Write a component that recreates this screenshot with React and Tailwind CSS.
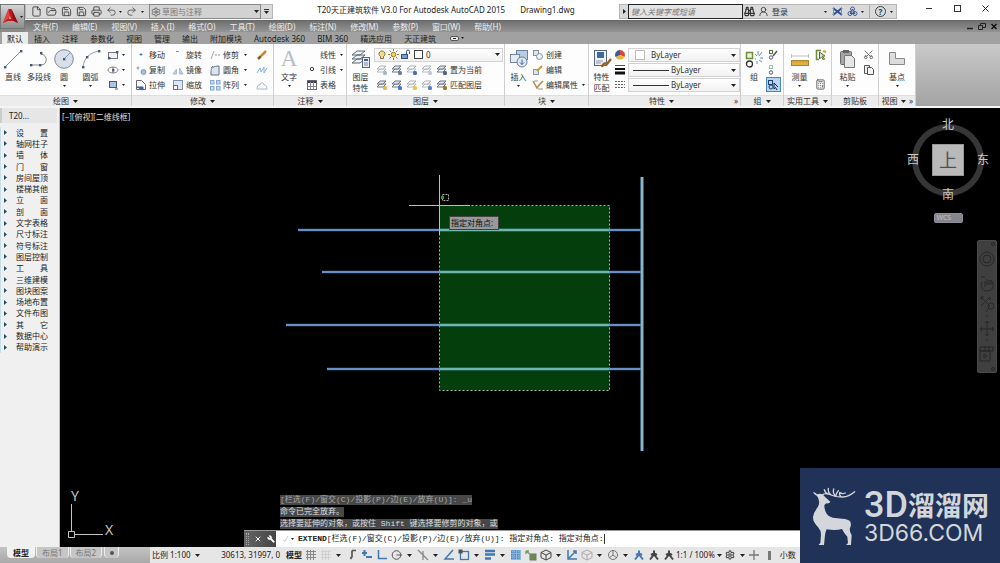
import React from "react";
import {
  Binoculars, File, FolderOpen, Save, Printer, Undo2, Redo2, Settings, UserRound, Wrench, X, Scissors, Calculator,
} from "lucide-react";

const G = ({ w = 14, h = 14, box, children, className = "" }) => (
  <svg
    aria-hidden="true"
    width={w}
    height={h}
    viewBox={box || `0 0 ${w} ${h}`}
    fill="none"
    stroke="#555"
    strokeWidth="1"
    className={`shrink-0 ${className}`}
  >
    {children}
  </svg>
);

const Caret = ({ className = "" }) => (
  <svg aria-hidden="true" width="5" height="3" viewBox="0 0 5 3" className={`shrink-0 ${className}`}>
    <path d="M0 0h5L2.5 3z" fill="#222" />
  </svg>
);

const Dot = () => (
  <svg aria-hidden="true" width="3" height="2" viewBox="0 0 3 2" className="shrink-0">
    <path d="M0 0h3L1.5 2z" fill="#222" />
  </svg>
);

/* ---------- ribbon drawings ---------- */

const node = (x, y) => <rect x={x - 1} y={y - 1} width="2.4" height="2.4" fill="#46597a" stroke="none" />;

const LineIcon = () => (
  <G w={20} h={20}><path d="M2 18L18 2" stroke="#888" />{node(2, 18)}{node(18, 2)}</G>
);
const PolyIcon = () => (
  <G w={20} h={20}>
    <path d="M2 16h10c7 0 7-10 0-11" stroke="#888" />
    {node(2, 16)}{node(11, 16)}{node(12, 4)}
  </G>
);
const CircleIcon = () => (
  <G w={20} h={20}>
    <circle cx="10" cy="10" r="9.3" fill="#d8dfe9" stroke="#7b8797" />
    <path d="M10 10l6-6" stroke="#8294b5" />{node(10, 10)}
  </G>
);
const ArcIcon = () => (
  <G w={20} h={20}>
    <path d="M2 18C3 9 8 4 18 2" stroke="#999" />
    {node(2, 18)}{node(6, 8)}{node(18, 2)}
  </G>
);
const RectIcon = () => (
  <G w={12} h={10}><rect x="1.5" y="2.5" width="9" height="6" fill="#eef1f5" stroke="#777" />{node(2, 8)}{node(10, 2)}</G>
);
const EllipseIcon = () => (
  <G w={12} h={10}><ellipse cx="6" cy="5" rx="5" ry="3" stroke="#888" />{node(6, 5)}<path d="M6 2v6" stroke="#667" /></G>
);
const HatchIcon = () => (
  <G w={12} h={10}><rect x="2.5" y="1.5" width="7" height="6" fill="#a9c4e6" stroke="#557" /><path d="M8 9h3" stroke="#557" /></G>
);
const MoveIcon = () => <G w={12} h={12}><path d="M6 4v3M4.500 5.500h3" stroke="#5d7fb0" /></G>;
const CopyDots = () => (
  <G w={12} h={12}><circle cx="3" cy="4" r="1.4" fill="#9cb0cc" stroke="none" /><circle cx="8.500" cy="8" r="2.4" fill="#a9c0e2" stroke="#7b93b8" /></G>
);
const StretchIcon = () => (
  <G w={12} h={12}><path d="M1.500 1.500h5l4 4v5h-9z" stroke="#667" fill="#fff" /><path d="M2 8h6v3z" fill="#3c6297" stroke="#3c6297" /></G>
);
const RotateIcon = () => <G w={12} h={12}><path d="M4 2.500h3" stroke="#6a94c6" /></G>;
const MirrorIcon = () => <G w={12} h={12}><path d="M1 10l3.500-5v5zM11 10L7.500 4v6z" fill="#c2d3ea" stroke="#a6b9d5" /></G>;
const ScaleIcon = () => (
  <G w={12} h={12}><rect x="1.500" y="1.500" width="9" height="9" fill="#dce8f6" stroke="#7d90ab" /><rect x="1.500" y="6.500" width="4" height="4" fill="#fff" stroke="#4c74ad" /></G>
);
const TrimIcon = () => <G w={12} h={12}><path d="M2 10L5 2" stroke="#aaa" /><path d="M6 6h2M9 6h2" stroke="#999" /></G>;
const FilletIcon = () => <G w={12} h={12}><path d="M2 11V8c0-4 2-6 8-6v9z" fill="#dbe4ef" stroke="#66758a" /><path d="M2 4l2-2" stroke="#66758a" /></G>;
const ArrayIcon = () => (
  <G w={12} h={12}>
    {[[1, 1], [7, 1], [1, 7], [7, 7]].map(([x, y]) => (
      <rect key={`${x}${y}`} x={x + 0.5} y={y + 0.5} width="3.500" height="3.500" fill="#c6daf1" stroke="#86a6cf" />
    ))}
  </G>
);
const EraseIcon = () => <G w={12} h={12}><path d="M2 10l3-3" stroke="#8a5a22" strokeWidth="2.500" /><path d="M5 7l5-5" stroke="#c88a35" strokeWidth="2.500" /></G>;
const ExplodeIcon = () => <G w={12} h={12}><path d="M1 9l3-5 1 4 3-5v6l3-5" stroke="#8fb0dc" /></G>;
const OffsetIcon = () => <G w={12} h={12}><path d="M1 10h10c0-3-1-4-3-4 0-3-4-3-4 0-2 0-3 1-3 4z" stroke="#a8b8cc" /></G>;
const LeaderIcon = () => <G w={12} h={12}><circle cx="6" cy="5" r="1.700" stroke="#444" /></G>;
const TableIcon = () => (
  <G w={12} h={12}><rect x="1.500" y="1.500" width="9" height="9" stroke="#667" /><path d="M1.500 3h9" stroke="#445" strokeWidth="2" /><path d="M1.500 7.500h9M4.500 3v8M7.500 3v8" stroke="#889" /></G>
);
const sheet = (x, y, fill = "#e8edf3", stroke = "#6b7684") => (
  <path d={`M${x} ${y + 3}l3-3h6l-3 3z`} fill={fill} stroke={stroke} />
);
const LayersIcon = () => (
  <G w={20} h={20}>
    <path d="M1 14l5-4h8l-5 4zM1 10l5-4h8l-5 4zM1 6l5-4h8l-5 4z" fill="#edf0f4" stroke="#5f6873" />
    <rect x="11.500" y="8.500" width="7" height="10" fill="#e8eef6" stroke="#56657a" />
    <path d="M13 11h4" stroke="#3b6298" strokeWidth="2" /><path d="M13 14h4M13 16h4" stroke="#889" />
  </G>
);
const LayerSmall = ({ badge = "#e3b43f", dim }) => (
  <G w={12} h={12}>
    {sheet(1, 5, "#fff", dim ? "#b4bac2" : "#6b7684")}
    {sheet(1, 2, dim ? "#fff" : "#dfe6ee", dim ? "#a9b0b8" : "#6b7684")}
    <rect x="7" y="7" width="4" height="4" rx="1.500" fill={badge} stroke="none" />
  </G>
);
const InsertIcon = () => (
  <G w={20} h={20}>
    <rect x="7.500" y="1.500" width="11" height="9" fill="#b8cbe4" stroke="#6d83a3" />
    <rect x="1.500" y="5.500" width="9" height="8" fill="#e4ebf4" stroke="#77869c" />
    <circle cx="13" cy="13" r="5" fill="#dfe7f0" stroke="#6e7f96" /><path d="M13 10.500v5m-2-2l2 2 2-2" stroke="#3a6ab2" />
  </G>
);
const CreateIcon = () => <G w={12} h={12}><rect x="1.500" y="1.500" width="5" height="5" fill="#dfe6ee" stroke="#8290a3" /><circle cx="7.500" cy="7.500" r="3" fill="#eef1f5" stroke="#8290a3" /></G>;
const EditIcon = () => <G w={12} h={12}><rect x="1.500" y="5.500" width="5" height="5" fill="#dfe6ee" stroke="#8c97a6" /><path d="M5 7l5-5" stroke="#cc9b3c" strokeWidth="2" /></G>;
const AttrIcon = () => <G w={12} h={12}><path d="M1 2l4 7 2-3 4-4" stroke="#b98b45" strokeWidth="1.500" /><path d="M6 10h5M2 2h4" stroke="#8c97a6" /></G>;
const PropsIcon = () => (
  <G w={20} h={20}>
    <rect x="2.500" y="1.500" width="12" height="15" fill="#eef3f9" stroke="#55647a" />
    <rect x="5" y="3" width="7" height="6" fill="#3f689f" stroke="none" /><path d="M4 12h7M4 14h5" stroke="#8894a5" />
    <path d="M10 18c1-4 3-4 5-3l4-5" stroke="#9a6128" strokeWidth="2.400" />
  </G>
);
const WheelIcon = () => (
  <G w={12} h={12}>
    <path d="M6 6V1a5 5 0 0 1 4.500 7z" fill="#d9473a" stroke="none" />
    <path d="M6 6l4.500 2a5 5 0 0 1-9 0z" fill="#e6b82f" stroke="none" />
    <path d="M6 6L1.500 8A5 5 0 0 1 6 1z" fill="#345c9e" stroke="none" />
  </G>
);
const WeightsIcon = () => <G w={12} h={12}><path d="M1 1.500h10" /><path d="M1 5h10" stroke="#111" strokeWidth="2" /><path d="M1 9h10" stroke="#111" strokeWidth="3" /></G>;
const TypesIcon = () => <G w={12} h={12}><path d="M1 2.500h10M1 5.500h10M1 8.500h10" stroke="#666" strokeDasharray="2 1" /></G>;
const GroupIcon = () => (
  <G w={20} h={20}>
    <rect x="2.500" y="3.500" width="6" height="6" fill="#edf3dd" stroke="#6d8f3c" strokeWidth="1.500" />
    <circle cx="5.500" cy="15" r="3" stroke="#333" strokeWidth="1.300" />
    <path d="M11 5l2 2M14 2v4M18 3l-3 4M12 10h-1M16 9h3M15 11l3 2M13 12v3" stroke="#5c90c4" />
  </G>
);
const UngroupIcon = ({ pencil }) => (
  <G w={12} h={12}><rect x="2.500" y="1.500" width="3" height="3" stroke={pencil ? "#557a33" : "#8ca"} /><circle cx="4" cy="8.500" r="1.700" stroke="#557" />{pencil && <path d="M6 7l4-5" stroke="#555" strokeWidth="1.500" />}</G>
);
const GroupSelIcon = () => <G w={12} h={12}><rect x="1.500" y="1.500" width="4" height="4" stroke="#246" /><circle cx="4" cy="8" r="2" stroke="#246" /><path d="M7 4v6l1.500-1.500L10 11M7 4l4 4" stroke="#223" /></G>;
const MeasureIcon = () => (
  <G w={20} h={20}><path d="M1.500 5v4M18.500 5v4M1.500 7h17" stroke="#b9c2cc" /><rect x="1.500" y="11.500" width="17" height="5" fill="#e0b148" stroke="#b18325" /><path d="M4 12v2M7 12v2M10 12v2M13 12v2M16 12v2" stroke="#c4962f" /></G>
);
const QuickSelIcon = () => <G w={12} h={12}><path d="M6 1.500H1.500v9H4" stroke="#6c8c3e" strokeWidth="1.500" /><path d="M4.500 3v7l2-2 2 3 1-1-2-3h2.500z" fill="#d5e3bd" stroke="#586b3b" /><path d="M8 2l3 1" stroke="#d79b2c" strokeWidth="2" /></G>;
const PasteIcon = () => (
  <G w={20} h={20}>
    <rect x="2.500" y="2.500" width="11" height="13" rx="1" fill="#a6a6a6" stroke="#6b6b6b" /><rect x="5" y="1" width="6" height="3" fill="#666" stroke="none" />
    <path d="M6.500 6.500h7l3 3v9h-10z" fill="#e6e6e6" stroke="#777" />
  </G>
);
const ClipCopyIcon = () => <G w={12} h={12}><path d="M1.500 1.500h5v8h-5z" fill="#eee" /><path d="M4.500 3.500h4l2 2v5h-6z" fill="#f3f3f3" /></G>;
const BaseIcon = () => <G w={20} h={20}><path d="M2.500 15.500v-12h6v6h9v6z" fill="#dcdcdc" stroke="#888" /></G>;

/* ---------- ribbon building blocks ---------- */

const Big = ({ icon, label, label2, arrow, className = "" }) => (
  <button type="button" className={`flex h-[48px] flex-col items-center text-center leading-[11px] ${className}`}>
    <span className="flex h-[24px] items-center justify-center">{icon}</span>
    <span className="whitespace-nowrap">{label}</span>
    {label2 && <span className="whitespace-nowrap">{label2}</span>}
    {arrow && <span className="flex h-[8px] items-center"><Dot /></span>}
  </button>
);

const Cmd = ({ icon, label, arrow, name }) => (
  <div className="flex h-[15px] items-center">
    <button type="button" aria-label={label ? undefined : name} className="flex items-center gap-[2px] whitespace-nowrap">
      {icon}
      {label}
    </button>
    {arrow && (
      <button type="button" aria-label={`${label || name} 更多`} className="flex h-[15px] flex-1 items-center justify-center"><Dot /></button>
    )}
  </div>
);

const Panel = ({ title, arrow = true, launcher, className, children }) => (
  <section aria-label={title} className={`flex shrink-0 flex-col border-r border-[#cfcfcf] bg-[#fdfdfd] ${className}`}>
    <div className="flex h-[51px] gap-0 pt-[3px]">{children}</div>
    <div className="flex h-[11px] items-center border-t border-[#dedede] bg-[#ececec] leading-[10px]">
      <button type="button" className="flex flex-1 items-center justify-center gap-1 whitespace-nowrap">{title}{arrow && <Caret />}</button>
      {launcher && <button type="button" aria-label={`${title}设置`} className="pr-[2px]">»</button>}
    </div>
  </section>
);

const PropSelect = ({ label, swatch }) => (
  <div className="flex h-[14px] items-center border border-[#d3d3d3] bg-gradient-to-b from-white to-[#f1f1f1]">
    {swatch ? (
      <span className="mx-[6px] h-[10px] w-[10px] border border-[#bbb] bg-white" />
    ) : (
      <span className="ml-1 mr-[2px] h-px w-[36px] bg-[#333]" />
    )}
    <select aria-label={label} className="h-3 min-w-0 flex-1 appearance-none bg-transparent leading-3 outline-none"><option>ByLayer</option></select>
    <Caret className="mr-[3px]" />
  </div>
);

/* ---------- page regions ---------- */

function TitleBar() {
  const quick = [
    ["新建", File], ["打开", FolderOpen], ["保存", Save], ["另存为", Save], ["打印", Printer],
  ];
  return (
    <div className="flex h-5 items-start">
      <div className="mt-1 flex h-[15px] items-center border border-[#b5b5b5] bg-[#dadada] pl-[3px]">
        {quick.map(([name, Icon]) => (
          <button key={name} type="button" aria-label={name} className="flex w-[15px] justify-center">
            <Icon size={11} strokeWidth={2} color="#444" />
          </button>
        ))}
        <button type="button" aria-label="放弃" className="flex w-[15px] justify-center"><Undo2 size={11} color="#555" /></button>
        <Dot />
        <button type="button" aria-label="重做" className="flex w-[19px] justify-center"><Redo2 size={11} color="#555" /></button>
        <Dot />
        <div className="ml-[5px] flex h-[15px] w-[112px] items-center border border-[#888] bg-[#d2d2d2] px-px">
          <Settings size={10} color="#555" />
          <select aria-label="工作空间" className="ml-px h-[13px] min-w-0 flex-1 appearance-none bg-transparent leading-[13px] text-[#777] outline-none"><option>草图与注释</option></select>
          <Caret />
        </div>
        <button type="button" aria-label="自定义" className="flex w-[11px] flex-col items-center gap-px"><span className="h-px w-[5px] bg-[#333]" /><Caret /></button>
      </div>
      <h1 className="flex flex-1 justify-center gap-[15px] whitespace-nowrap pt-[3px] leading-[13px] text-[#222]">
        <span>T20天正建筑软件 V3.0 For Autodesk AutoCAD 2015</span>
        <span>Drawing1.dwg</span>
      </h1>
      <div className="mt-1 flex h-[15px] items-center border border-[#b5b5b5] bg-[#dadada]">
        <button type="button" aria-label="展开" className="flex h-[13px] w-[8px] items-center justify-center">
          <svg aria-hidden="true" width="3" height="5" viewBox="0 0 3 5"><path d="M0 0v5l3-2.500z" fill="#222" /></svg>
        </button>
        <input aria-label="搜索" placeholder="键入关键字或短语" className="h-[15px] w-[115px] border border-[#222] bg-[#e4e4e4] px-[2px] italic outline-none placeholder:text-[#777]" />
        <button type="button" aria-label="查找" className="flex w-[13px] justify-center"><Binoculars size={11} color="#333" strokeWidth={2.5} /></button>
        <button type="button" className="ml-[2px] flex items-center gap-[3px]"><UserRound size={11} color="#444" />登录</button>
        <span className="ml-[36px]"><Dot /></span>
        <button type="button" aria-label="Exchange" className="ml-[5px]">
          <G w={11} h={11}><path d="M1 2l9 7M1 9l9-7" stroke="#2f4f96" strokeWidth="2" /><path d="M1.500 2v7M9.500 2v7" stroke="#7b8fb8" /></G>
        </button>
        <button type="button" aria-label="A360" className="ml-[4px] flex items-center gap-[3px]">
          <G w={11} h={11}><circle cx="5.500" cy="3" r="2" stroke="#3c5c9c" /><circle cx="3" cy="7.500" r="2" stroke="#3c5c9c" /><circle cx="8" cy="7.500" r="2" stroke="#3c5c9c" /><path d="M5.500 3L3 7.500h5z" stroke="#3c5c9c" /></G>
          <Dot />
        </button>
        <span className="ml-[5px] h-[13px] w-px bg-[#aaa]" />
        <button type="button" aria-label="帮助" className="ml-[5px] flex items-center gap-[4px] pr-[3px]">
          <span className="flex h-[11px] w-[11px] items-center justify-center rounded-full border border-[#345] text-[8px] font-bold leading-none text-[#245]">?</span>
          <Dot />
        </button>
      </div>
      <div className="ml-[18px] flex h-[17px] items-center">
        <button type="button" aria-label="最小化" className="flex w-[28px] justify-center"><span className="h-px w-[6px] bg-[#333]" /></button>
        <button type="button" aria-label="最大化" className="flex w-[28px] justify-center"><span className="h-[7px] w-[7px] border border-[#333]" /></button>
        <button type="button" aria-label="关闭" className="flex w-[29px] justify-center">
          <G w={7} h={7}><path d="M.5 .5l6 6M6.500 .5l-6 6" stroke="#222" /></G>
        </button>
      </div>
    </div>
  );
}

const MENUS = ["文件(F)", "编辑(E)", "视图(V)", "插入(I)", "格式(O)", "工具(T)", "绘图(D)", "标注(N)", "修改(M)", "参数(P)", "窗口(W)", "帮助(H)"];
const TABS = ["插入", "注释", "参数化", "视图", "管理", "输出", "附加模块", "Autodesk 360", "BIM 360", "精选应用", "天正建筑"];

function Header() {
  return (
    <header className="shrink-0">
      <div className="flex bg-white">
        <div className="flex w-[25px] shrink-0 flex-col bg-gradient-to-b from-white from-50% to-[#8a8a8a] to-50% pt-1">
          <button type="button" aria-label="应用程序菜单" className="flex h-[25px] items-center gap-px border border-[#777] bg-gradient-to-b from-[#d5d5d5] to-[#8d8d8d] pl-px">
            <G w={17} h={17}>
              <path d="M6.500 1h3L16 15l-5-2H6L1 15z" fill="#c2191c" stroke="none" />
              <path d="M6.500 1L8 9l-7 6z" fill="#e2443f" stroke="none" />
              <path d="M9.500 1L16 15l-5-3z" fill="#8c1012" stroke="none" />
              <path d="M8 8l1.200 3h-2.400z" fill="#c9a0a0" stroke="none" />
            </G>
            <Dot />
          </button>
        </div>
        <div className="min-w-0 flex-1">
          <TitleBar />
          <nav className="flex h-3 items-center border-t border-[#666] bg-gradient-to-b from-[#707070] to-[#949494] pl-2 text-[#eee]">
            <div className="flex flex-1 gap-[14px]">
              {MENUS.map((m) => <button key={m} type="button" className="whitespace-nowrap leading-[11px]">{m}</button>)}
            </div>
            <div className="flex items-center gap-[5px] pr-[3px]">
              <button type="button" aria-label="最小化图形"><G w={6} h={7}><path d="M0 5.500h6" stroke="#222" strokeWidth="1.500" /></G></button>
              <button type="button" aria-label="还原图形"><G w={8} h={7}><path d="M2.500 3V.5h5v4H5M.5 2.500h4v4h-4z" stroke="#222" /></G></button>
              <button type="button" aria-label="关闭图形"><G w={6} h={7}><path d="M.5 1l5 5M5.500 1l-5 5" stroke="#111" strokeWidth="1.500" /></G></button>
            </div>
          </nav>
        </div>
      </div>
      <div className="flex h-3 bg-[#a1a1a1] pl-[2px] leading-[13px] text-[#222]">
        <button type="button" className="bg-[#ececec] px-[5px]">默认</button>
        <div className="flex items-center">
          {TABS.map((t) => <button key={t} type="button" className="whitespace-nowrap px-[6px]">{t}</button>)}
          <button type="button" aria-label="最小化功能区" className="ml-[8px] flex items-center gap-[2px]">
            <span className="flex h-[5px] w-[9px] items-center justify-center rounded-xs border border-[#555] bg-[#eee]"><span className="h-px w-[3px] bg-[#222]" /></span>
            <Dot />
          </button>
        </div>
      </div>
    </header>
  );
}

function Ribbon() {
  return (
    <div className="flex shrink-0 border-b-2 border-[#f4f4f4] bg-[#f4f4f4]">
      <Panel title="绘图" className="w-[132px]">
        <Big icon={<LineIcon />} label="直线" className="w-[26px]" />
        <Big icon={<PolyIcon />} label="多段线" className="w-[26px]" />
        <Big icon={<CircleIcon />} label="圆" arrow className="w-[24px]" />
        <Big icon={<ArcIcon />} label="圆弧" arrow className="w-[29px]" />
        <div className="flex-1 pr-[3px] pl-[2px]">
          <Cmd name="矩形" icon={<RectIcon />} arrow />
          <Cmd name="椭圆" icon={<EllipseIcon />} arrow />
          <Cmd name="图案填充" icon={<HatchIcon />} arrow />
        </div>
      </Panel>
      <Panel title="修改" className="w-[142px]">
        <div className="w-[37px] pl-[3px]">
          <Cmd icon={<MoveIcon />} label="移动" /><Cmd icon={<CopyDots />} label="复制" /><Cmd icon={<StretchIcon />} label="拉伸" />
        </div>
        <div className="w-[37px] pl-[3px]">
          <Cmd icon={<RotateIcon />} label="旋转" /><Cmd icon={<MirrorIcon />} label="镜像" /><Cmd icon={<ScaleIcon />} label="缩放" />
        </div>
        <div className="w-[46px] pl-[3px]">
          <Cmd icon={<TrimIcon />} label="修剪" arrow /><Cmd icon={<FilletIcon />} label="圆角" arrow /><Cmd icon={<ArrayIcon />} label="阵列" arrow />
        </div>
        <div className="pl-1">
          <Cmd name="删除" icon={<EraseIcon />} /><Cmd name="分解" icon={<ExplodeIcon />} /><Cmd name="偏移" icon={<OffsetIcon />} />
        </div>
      </Panel>
      <Panel title="注释" className="w-[73px]">
        <Big icon={<span className="font-['Liberation_Serif',serif] text-[23px] leading-[24px] text-[#b9bdc4]">A</span>} label="文字" arrow className="w-[30px]" />
        <div className="flex-1 pl-[2px]">
          <Cmd icon={<G w={12} h={12} />} label="线性" arrow /><Cmd icon={<LeaderIcon />} label="引线" arrow /><Cmd icon={<TableIcon />} label="表格" />
        </div>
      </Panel>
      <Panel title="图层" className="w-[158px]">
        <Big icon={<LayersIcon />} label="图层" label2="特性" className="w-[27px]" />
        <div className="flex-1 pr-px">
          <div className="flex h-[15px] items-center">
            <div className="flex h-[14px] flex-1 items-center gap-px border border-[#d3d3d3] bg-gradient-to-b from-white to-[#f1f1f1] pl-[2px]">
              <G w={10} h={11}><path d="M3.500 7.500a3 3 0 1 1 3 0v2h-3z" fill="#f2dd86" stroke="#7c7350" /></G>
              <G w={11} h={11}><circle cx="5.500" cy="5.500" r="2.300" fill="#f4d262" stroke="#9d7e22" /><path d="M5.500 0v2M5.500 9v2M0 5.500h2M9 5.500h2M1.500 1.500l1.500 1.500M8 8l1.500 1.500M9.500 1.500L8 3M3 8L1.500 9.500" stroke="#9d7e22" /></G>
              <G w={11} h={11}><rect x="1.500" y="5.500" width="6" height="4" fill="#7d9cc8" stroke="#2f5288" /><path d="M6.500 5V2.500a1.500 1.500 0 0 1 3 0V5" stroke="#2f5288" /></G>
              <span className="mx-[2px] h-[9px] w-[9px] border border-[#444] bg-white" />
              <select aria-label="当前图层" className="h-3 min-w-0 flex-1 appearance-none bg-transparent leading-3 outline-none"><option>0</option></select>
              <Caret className="mr-[2px]" />
            </div>
          </div>
          <div className="flex gap-[3px] pl-[2px]">
            <Cmd name="关" icon={<LayerSmall dim badge="#a9b6c6" />} />
            <Cmd name="隔离" icon={<LayerSmall badge="#6e7e92" />} />
            <Cmd name="冻结" icon={<LayerSmall dim badge="#3f72bb" />} />
            <Cmd name="锁定" icon={<LayerSmall dim badge="#c3cad3" />} />
            <Cmd icon={<LayerSmall badge="#48648c" />} label="置为当前" />
          </div>
          <div className="flex gap-[3px] pl-[2px]">
            <Cmd name="打开所有图层" icon={<LayerSmall badge="#e2bd52" />} />
            <Cmd name="取消隔离" icon={<LayerSmall badge="#4c78b6" />} />
            <Cmd name="解冻所有图层" icon={<LayerSmall dim badge="#eac24b" />} />
            <Cmd name="解锁" icon={<LayerSmall dim badge="#5c82b8" />} />
            <Cmd icon={<LayerSmall badge="#a8702f" />} label="匹配图层" />
          </div>
        </div>
      </Panel>
      <Panel title="块" className="w-[84px]">
        <Big icon={<InsertIcon />} label="插入" arrow className="w-[27px]" />
        <div className="flex-1">
          <Cmd icon={<CreateIcon />} label="创建" /><Cmd icon={<EditIcon />} label="编辑" /><Cmd icon={<AttrIcon />} label="编辑属性" arrow />
        </div>
      </Panel>
      <Panel title="特性" launcher className="w-[152px]">
        <Big icon={<PropsIcon />} label="特性" label2="匹配" className="w-[25px]" />
        <div className="w-[14px]">
          <Cmd name="对象颜色" icon={<WheelIcon />} /><Cmd name="线宽" icon={<WeightsIcon />} /><Cmd name="线型" icon={<TypesIcon />} />
        </div>
        <div className="flex flex-1 flex-col gap-px pt-px">
          <PropSelect label="对象颜色" swatch /><PropSelect label="线宽" /><PropSelect label="线型" />
        </div>
      </Panel>
      <Panel title="组" className="w-[43px]">
        <Big icon={<GroupIcon />} label="组" className="w-[26px]" />
        <div>
          <Cmd name="组编辑" icon={<UngroupIcon pencil />} />
          <Cmd name="解除编组" icon={<UngroupIcon />} />
          <div className="-ml-px w-[15px] border border-[#4a86c0] bg-[#b5d6f3]"><div className="-my-px"><Cmd name="启用组选择" icon={<GroupSelIcon />} /></div></div>
        </div>
      </Panel>
      <Panel title="实用工具" className="w-[48px]">
        <Big icon={<MeasureIcon />} label="测量" arrow className="w-[31px]" />
        <div>
          <Cmd name="快速选择" icon={<QuickSelIcon />} />
          <div className="h-[15px]" />
          <Cmd name="计算器" icon={<Calculator size={11} color="#555" />} />
        </div>
      </Panel>
      <Panel title="剪贴板" arrow={false} className="w-[47px]">
        <Big icon={<PasteIcon />} label="粘贴" arrow className="w-[31px]" />
        <div><Cmd name="剪切" icon={<Scissors size={11} color="#666" className="-rotate-90" />} /><Cmd name="复制到剪贴板" icon={<ClipCopyIcon />} /></div>
      </Panel>
      <Panel title="视图" launcher className="w-[37px]">
        <Big icon={<BaseIcon />} label="基点" arrow className="w-full" />
      </Panel>
      <div className="flex-1 bg-gradient-to-b from-[#c9c9c9] to-[#a3a3a3]" />
    </div>
  );
}

const TOOLS = ["设　　置", "轴网柱子", "墙　　体", "门　　窗", "房间屋顶", "楼梯其他", "立　　面", "剖　　面", "文字表格", "尺寸标注", "符号标注", "图层控制", "工　　具", "三维建模", "图块图案", "场地布置", "文件布图", "其　　它", "数据中心", "帮助演示"];

function ToolTree() {
  return (
    <aside className="w-[60px] shrink-0 border-r border-[#bbb] bg-[#f0f0f0]">
      <h2 className="flex h-[15px] w-[57px] items-center border-l-2 border-[#ccc] bg-[#e6e6e6] pl-[7px] text-[#222]">T20...</h2>
      <ul className="mt-[4px] grid h-[226px] auto-rows-fr border-l border-[#c6dfe8]">
        {TOOLS.map((t) => (
          <li key={t} className="flex">
            <button type="button" className="flex items-center gap-[9px] whitespace-pre pl-[3px] leading-none text-[#222]">
              <svg aria-hidden="true" width="3" height="5" viewBox="0 0 3 5"><path d="M0 0v5l3-2.500z" fill="#1f4f63" /></svg>
              {t}
            </button>
          </li>
        ))}
      </ul>
    </aside>
  );
}

const BEAMS = [[122, 238], [164, 262], [217, 226], [261, 267]];

function Drawing() {
  return (
    <svg aria-label="图形" role="img" width="940" height="439" viewBox="0 0 940 439" className="absolute left-0 top-0" fill="none">
      <rect x="379.500" y="97.500" width="170" height="185" fill="#033e0c" />
      <rect x="379.500" y="97.500" width="170" height="185" stroke="#a9b8a8" strokeDasharray="2 2" />
      {BEAMS.map(([y, x]) => (
        <g key={y}>
          <path d={`M${x} ${y}H582`} stroke="#3f68a6" strokeWidth="2.400" />
          <path d={`M${x} ${y}H582`} stroke="#92b8e2" />
          <path d={`M380 ${y}H549`} stroke="#4d9a92" strokeWidth="2.400" />
          <path d={`M380 ${y}H549`} stroke="#93d2c4" />
        </g>
      ))}
      <path d="M582 69V343" stroke="#4f7f9c" strokeWidth="3.400" />
      <path d="M582 69V343" stroke="#a5cddb" strokeWidth="1.400" />
      <path d="M379.500 67V127M349 97.500H410" stroke="#b9bfb9" />
      <rect x="382.500" y="86.500" width="6" height="6" stroke="#aaa" strokeDasharray="2 1" />
      <rect x="381" y="88" width="3" height="3" fill="#2d9a3c" />
    </svg>
  );
}

function ViewCube() {
  return (
    <div className="absolute right-[11px] top-[11px] flex w-[82px] flex-col items-center text-[#c9c9c9]">
      <div className="relative grid h-[82px] w-[82px] grid-cols-3 grid-rows-3 place-items-center text-[12px] leading-none">
        <svg aria-hidden="true" width="74" height="74" viewBox="0 0 74 74" className="absolute left-1 top-1">
          <circle cx="37" cy="37" r="33" fill="none" stroke="#363636" strokeWidth="6" />
        </svg>
        <button type="button" className="relative col-start-2 row-start-1 self-start">北</button>
        <button type="button" className="relative col-start-1 row-start-2 justify-self-start">西</button>
        <button type="button" className="relative col-start-2 row-start-2 flex h-8 w-8 items-center justify-center border border-[#999] bg-[#b9b9b9] text-[18px] text-[#505058]">上</button>
        <button type="button" className="relative col-start-3 row-start-2 justify-self-end">东</button>
        <button type="button" className="relative col-start-2 row-start-3 self-end">南</button>
      </div>
      <button type="button" className="mt-[12px] flex h-[10px] w-[29px] items-center rounded-xs border border-[#8d8d95] bg-[#85858d] pl-[2px] text-[7px] leading-[8px] text-[#c0c0c6]">WCS</button>
    </div>
  );
}

function NavBar() {
  return (
    <div className="absolute right-[3px] top-[132px] flex w-5 flex-col items-center rounded-xs border border-[#4a4a4a] bg-[#3f3f3f]">
      <svg role="img" aria-label="导航栏" width="18" height="131" viewBox="0 0 18 131" fill="none" stroke="#272727">
        <circle cx="15" cy="3" r="1.500" /><circle cx="9" cy="18" r="7" /><circle cx="9" cy="18" r="4" />
        <path d="M3 36h4M4 41c-2 4 0 9 5 9s7-4 6-8l-2-3v5M11 39v5M9 38v6M7 40v6" />
        <path d="M3 56l9 9M12 56l-9 9M3 59v-3h3M12 59v-3" /><circle cx="13" cy="65" r="3" /><path d="M11 67l-3 4" />
        <path d="M8 75h2M9 80v15M2 88h14M7 82l2-2 2 2M7 93l2 2 2-2M4 86l-2 2 2 2M14 86l2 2-2 2M8 99h2" />
        <path d="M2 106h13v4H2zM2 110h10v10H2zM7 105v5M11 105v5M6 113l3 2-3 2z" /><circle cx="15" cy="128" r="1.500" />
      </svg>
    </div>
  );
}

const HISTORY = ["[栏选(F)/窗交(C)/投影(P)/边(E)/放弃(U)]: _u", "命令已完全放弃。", "选择要延伸的对象，或按住 Shift 键选择要修剪的对象，或"];

function CommandLine() {
  return (
    <div className="absolute bottom-0 left-[184px] right-0 font-['Liberation_Mono','Noto_Sans_CJK_SC',monospace]">
      <div className="mb-px flex flex-col items-start gap-[2px] pl-[36px]">
        {HISTORY.map((h, i) => (
          <p key={h} className={`h-[10px] whitespace-nowrap bg-[#474747] leading-[10px] ${i === 0 ? "text-[#a8a8a8]" : "text-[#dedede]"}`}>{h}</p>
        ))}
      </div>
      <div className="flex h-[17px] border-t border-[#999] bg-white">
        <div className="flex w-[32px] items-center gap-[5px] bg-gradient-to-r from-[#666] to-[#444] pl-[2px]">
          <span className="h-3 w-[3px] border-x border-dotted border-[#aaa]" />
          <button type="button" aria-label="关闭命令行"><X size={8} color="#fff" strokeWidth={3} /></button>
          <button type="button" aria-label="自定义命令行"><Wrench size={8} color="#fff" fill="#fff" className="-scale-x-100" /></button>
        </div>
        <span className="flex items-center gap-[2px] pl-[7px] pr-1"><G w={6} h={6}><path d="M0 4l2 1 3-5" stroke="#ccc" /></G><Dot /></span>
        <label className="flex flex-1 items-center whitespace-pre text-[#222]">
          <strong>EXTEND</strong>[栏选(F)/窗交(C)/投影(P)/边(E)/放弃(U)]: 指定对角点: 指定对角点:
          <input aria-label="命令" className="h-[10px] min-w-0 flex-1 border-l border-[#333] outline-none" />
        </label>
      </div>
    </div>
  );
}

/* ---------- status bar ---------- */

const blue = "#3f78b4";
const person = (c) => <path d="M6 1.500v4L2 10.500M6 5.500l4 5M3 6l3-2 3 2" stroke={c} strokeWidth="2" />;
const gridLines = (c) => <path d="M1 2.500h10M1 5.500h10M1 8.500h10M2.500 1v10M5.500 1v10M8.500 1v10" stroke={c} />;
const cube = (c) => <path d="M6 1l5 2.500v5L6 11 1 8.500v-5zM1 3.500L6 6l5-2.500M6 6v5" stroke={c} />;

const STATUS = [
  ["栅格", gridLines("#888")],
  ["捕捉", gridLines("#d0d0d0"), true],
  ["推断约束", <path d="M6 1.500h4M6 1.500v7M4.500 8l1 2" stroke="#555" strokeWidth="1.700" />],
  ["动态输入", <path d="M3.500 1v6M1 4h5M5 8h6" stroke={blue} strokeWidth="2" />],
  ["正交", <path d="M2.500 1v8.500H11" stroke={blue} strokeWidth="1.500" />],
  ["极轴追踪", <><circle cx="5.500" cy="6" r="4.300" stroke="#555" /><path d="M5.500 6H11" stroke="#555" /></>, true],
  ["等轴测草图", <path d="M1 1l10 10M6 2v9" stroke="#888" strokeWidth="1.300" />, true],
  ["对象捕捉追踪", <path d="M10 1L2 10h9" stroke={blue} strokeWidth="1.500" />],
  ["对象捕捉", <><rect x="2.500" y="2.500" width="8" height="8" stroke={blue} strokeWidth="1.300" /><rect x="1" y="1" width="3" height="3" fill="#355" /></>, true],
  ["线宽", <path d="M1 2h10M1 5.500h10M1 9.500h6" stroke={blue} strokeWidth="2.400" />, true],
  ["透明度", <><rect x="1" y="1" width="10" height="10" fill="#8fb8e0" stroke="none" /><path d="M2 1v10M5 1v10M8 1v10M1 3h10M1 6h10M1 9h10" stroke={blue} strokeDasharray="1 1" /></>],
  ["选择循环", <><rect x="5" y="5" width="6" height="6" fill="#6d8a4e" stroke="#6d7a5e" /><path d="M1 2l5 4M1 2h3M1 2v3" stroke="#7a9a6a" strokeWidth="1.500" /></>],
  ["三维对象捕捉", cube("#444"), true],
  ["动态UCS", <path d="M2 1v9h9M3 9l7-7M7 2h3v3" stroke={blue} strokeWidth="1.500" />],
  ["选择过滤", cube("#aaa"), true],
  ["小控件", <><circle cx="6" cy="6" r="4.500" stroke="#777" /><path d="M6 1v5M6 6l-4 3M6 6l4 3" stroke="#777" /></>, true],
  ["注释可见性", person(blue)],
  ["自动缩放", person("#444")],
  ["注释比例", person("#444")],
];

function StatusBar() {
  return (
    <footer className="flex h-4 shrink-0 items-stretch bg-[#e6e6e6] text-[#222]">
      <div className="flex w-[150px] shrink-0 items-start bg-gradient-to-b from-[#c4c4c4] to-[#a8a8a8]">
        <button type="button" className="ml-[7px] h-[11px] rounded-b-sm bg-[#f2f2f2] px-[6px] font-bold leading-[11px]">模型</button>
        {["布局1", "布局2"].map((l) => (
          <button key={l} type="button" className="ml-px h-[11px] rounded-b-sm border-x border-[#eee] bg-[#c6c6c6] px-[5px] leading-[11px] text-[#777]">{l}</button>
        ))}
        <button type="button" aria-label="新建布局" className="ml-[2px] flex h-[11px] w-[15px] items-center justify-center rounded-b-sm border-x border-[#eee] bg-[#c6c6c6]"><span className="h-1 w-1 rounded-full bg-[#555]" /></button>
      </div>
      <button type="button" className="flex w-[60px] items-center gap-1 whitespace-nowrap pl-[2px]">比例 1:100 <Caret /></button>
      <span className="flex w-[75px] items-center justify-end whitespace-nowrap pr-[5px]">30613, 31997, 0</span>
      <button type="button" className="w-[18px] font-bold">模型</button>
      {STATUS.map(([name, art, more]) => (
        <span key={name} className="flex items-center">
          <button type="button" aria-label={name} className="flex w-[15px] justify-center"><G w={12} h={12}>{art}</G></button>
          {more && <button type="button" aria-label={`${name}选项`} className="flex w-[11px] justify-center"><Caret /></button>}
        </span>
      ))}
      <button type="button" className="flex items-center gap-[2px] whitespace-nowrap">1:1 / 100% <Caret /></button>
      <button type="button" aria-label="切换工作空间" className="ml-[3px] flex items-center gap-[5px]"><Settings size={10} color="#555" strokeWidth={3} /><Caret /></button>
      <button type="button" aria-label="注释监视器" className="ml-[4px] flex items-center"><G w={10} h={10}><path d="M5 0v10M0 5h10" stroke="#777" strokeWidth="1.300" /></G></button>
      <button type="button" aria-label="单位" className="ml-[9px] flex items-center gap-[9px] whitespace-nowrap"><span className="h-[9px] w-[3px] bg-[#777]" />小数</button>
    </footer>
  );
}

function Brand() {
  return (
    <div className="absolute bottom-0 right-0 flex h-[95px] w-[200px] items-center bg-[#213258] pl-[11px] text-[#d3d6da]">
      <svg role="img" aria-label="鹿" width="45" height="60" viewBox="33 51 135 180" className="shrink-0">
        <path d="M39 69q7 1 12 7 8-4 17 0l8 9 15 13q-2 6-12 5l-6 5q0 16 7 26 5 9 18 12l28 3q20 1 25 9 4 9-1 19-3 7 5 22l-2 29h-14q0-3 5-5l-2-20q-10-10-16-23-18 5-46 1-4 8-5 18l-3 29H56q0-3 5-5l2-26q0-13-9-23-16-15-15-30 2-14 14-29 7-11 3-23-1-7-6-12-9-3-11-11z" fill="#d3d6da" />
        <path d="M66 79q6-7 18-4 20 9 44 9 18-1 36-16M84 75q-9-3-11-13M93 77q-10-6-8-19M108 82q-11-9-7-22M108 79q2-8 7-14M122 82q-5-5-3-11 8 5 17 1" fill="none" stroke="#d3d6da" strokeWidth="4" strokeLinecap="round" />
      </svg>
      <div className="ml-2 mt-1 whitespace-nowrap">
        <p className="flex h-[28px] items-center font-['Noto_Sans_CJK_SC',sans-serif] text-[27px] font-bold leading-[28px]"><span className="font-['Roboto',sans-serif] text-[36px] font-medium leading-[28px]">3D</span>溜溜网</p>
        <p className="mt-[2px] font-['Inter',sans-serif] text-[23px] leading-[24px]">3D66.COM</p>
      </div>
    </div>
  );
}

export default function App() {
  return (
    <div lang="zh-CN" className="relative flex h-screen min-h-[480px] flex-col overflow-hidden bg-[#f4f4f4] font-['Noto_Sans','Noto_Sans_CJK_SC',sans-serif] text-[8px] leading-[10px] text-[#333]">
      <Header />
      <Ribbon />
      <div className="flex min-h-0 flex-1">
        <ToolTree />
        <main className="relative min-w-0 flex-1 overflow-hidden bg-black">
          <Drawing />
          <p className="absolute left-[2px] top-1 text-[#ddd]">[−][俯视][二维线框]</p>
          <div role="tooltip" className="absolute left-[389px] top-[108px] flex h-[14px] w-[50px] items-center border border-[#444] bg-[#999] pl-px text-[#111]">指定对角点:</div>
          <ViewCube />
          <NavBar />
          <svg role="img" aria-label="坐标轴" width="60" height="52" viewBox="0 0 60 52" className="absolute bottom-2 left-1" fill="none" stroke="#c4c4c4">
            <path d="M7.500 17v28M10 47.500h29M4.500 44.500h6v6h-6z" />
            <text x="7" y="14" fill="#c4c4c4" stroke="none" fontSize="14">Y</text>
            <text x="41" y="48" fill="#c4c4c4" stroke="none" fontSize="14">X</text>
          </svg>
          <CommandLine />
        </main>
      </div>
      <StatusBar />
      <Brand />
    </div>
  );
}
